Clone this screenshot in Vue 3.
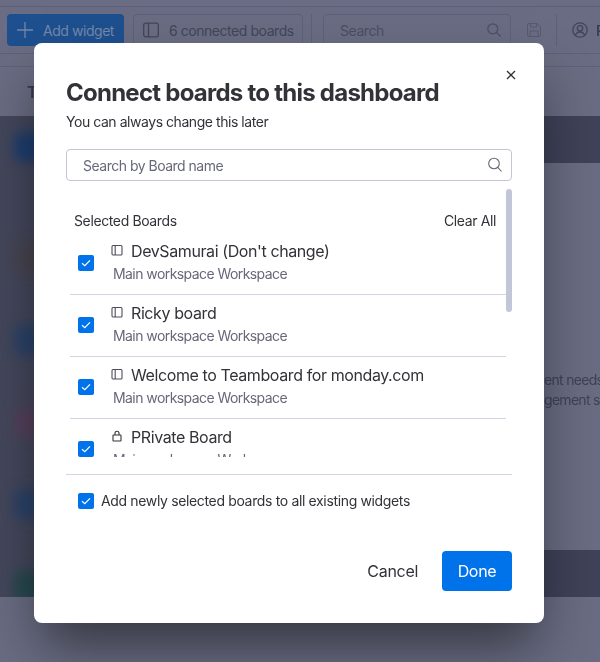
<script setup>
const boards = [
  { name: "DevSamurai (Don't change)", icon: 'board' },
  { name: 'Ricky board', icon: 'board' },
  { name: 'Welcome to Teamboard for monday.com', icon: 'board' },
  { name: 'PRivate Board', icon: 'lock' },
]
const blobs = ['blue1', 'grey', 'blue2', 'red', 'blue2', 'green']
</script>

<template>
  <div class="page">
    <div class="back">
      <div class="strip"></div>
      <header class="toolbar">
        <button class="add">
          <svg width="16" height="16" viewBox="0 0 16 16"><path d="M8 0v16M0 8h16" stroke="currentColor" stroke-width="1.300" fill="none" /></svg>
          <span>Add widget</span>
        </button>
        <div class="connected">
          <svg width="16" height="16" viewBox="0 0 16 16" fill="none" stroke="currentColor" stroke-width="1.300"><rect x=".7" y="1.200" width="14.600" height="13.600" rx="2" /><path d="M5.500 1.200v13.600" /></svg>
          <span>6 connected boards</span>
        </div>
        <i class="vsep"></i>
        <div class="bsearch">
          <span>Search</span>
          <svg width="14" height="14" viewBox="0 0 14 14" fill="none" stroke="currentColor" stroke-width="1.200"><circle cx="5.800" cy="5.800" r="5" /><path d="M9.400 9.400 13.500 13.500" /></svg>
        </div>
        <svg class="save" width="14" height="14" viewBox="0 0 14 14" fill="none" stroke="currentColor" stroke-width="1"><path d="M.5 2A1.500 1.500 0 0 1 2 .5h8L13.500 4v8a1.500 1.500 0 0 1-1.500 1.500H2A1.500 1.500 0 0 1 .5 12z" /><path d="M3.500.5v3.500h6V.5M3 13.500V8h8v5.500" /></svg>
        <i class="vsep last"></i>
        <svg class="user" width="16" height="16" viewBox="0 0 16 16" fill="none" stroke="currentColor" stroke-width="1.300"><circle cx="8" cy="8" r="7.200" /><circle cx="8" cy="6.300" r="2.700" /><path d="M3.300 13.400c.8-2.300 2.600-3.400 4.700-3.400s3.900 1.100 4.700 3.400" /></svg>
        <span class="uname">Ricky</span>
      </header>
      <div class="subbar"></div>
      <div class="tabs"><span>T</span></div>
      <div class="content">
        <div class="side">
          <i v-for="(b, i) in blobs" :key="i" class="blob" :class="b"></i>
        </div>
        <div class="main">
          <div class="band"></div>
          <div class="desc">
            <p>ent needs</p>
            <p>gement s</p>
          </div>
          <div class="band"></div>
        </div>
      </div>
    </div>

    <section class="modal">
      <button class="close" aria-label="Close">
        <svg width="10" height="10" viewBox="0 0 10 10"><path d="M1 1l8 8M9 1l-8 8" stroke="#323338" stroke-width="1.300" fill="none" /></svg>
      </button>
      <h1>Connect boards to this dashboard</h1>
      <p class="sub">You can always change this later</p>

      <div class="search">
        <span>Search by Board name</span>
        <svg width="16" height="16" viewBox="0 0 16 16" fill="none" stroke="#676879" stroke-width="1.100"><circle cx="7" cy="6.500" r="5.300" /><path d="M10.800 10.400 14.500 14.500" /></svg>
      </div>

      <div class="listwrap">
        <div class="scroller">
          <div class="listhead">
            <span>Selected Boards</span>
            <span>Clear All</span>
          </div>
          <ul class="list">
            <li v-for="b in boards" :key="b.name" class="row">
              <span class="check">
                <svg width="16" height="16" viewBox="0 0 16 16"><path d="M4 8.200 6.800 10.600 12 5.400" stroke="#fff" stroke-width="1.200" fill="none" /></svg>
              </span>
              <div class="rowtext">
                <div class="rowname">
                  <svg v-if="b.icon === 'board'" class="ico" width="12" height="12" viewBox="0 0 12 12" fill="none" stroke="#4d4e5c" stroke-width="1.100"><rect x="1" y="1.500" width="10" height="9.500" rx="1" /><path d="M4.200 1.500v9.500" /></svg>
                  <svg v-else class="ico" width="12" height="12" viewBox="0 0 12 12" fill="none" stroke="#323338" stroke-width="1.100"><rect x="2" y="5" width="8" height="6" rx=".6" /><path d="M4 5V3.200a2 2 0 0 1 4 0V5" /></svg>
                  <span>{{ b.name }}</span>
                </div>
                <div class="rowsub">Main workspace Workspace</div>
              </div>
            </li>
          </ul>
        </div>
        <i class="thumb"></i>
      </div>

      <label class="addnew">
        <span class="check">
          <svg width="16" height="16" viewBox="0 0 16 16"><path d="M4 8.200 6.800 10.600 12 5.400" stroke="#fff" stroke-width="1.200" fill="none" /></svg>
        </span>
        <span>Add newly selected boards to all existing widgets</span>
      </label>

      <footer class="foot">
        <button class="cancel">Cancel</button>
        <button class="done">Done</button>
      </footer>
    </section>
  </div>
</template>

<style>
html, body { margin: 0; padding: 0; }
</style>

<style scoped>
.page {
  position: relative;
  width: 600px;
  height: 662px;
  overflow: hidden;
  background: #696c82;
  font-family: Inter, "Open Sans", sans-serif;
}
.back {
  height: 662px;
  display: flex;
  flex-direction: column;
  color: #3c3e4c;
  background: #696c82;
  filter: blur(0.5px);
}
.strip { height: 6px; flex: none; border-bottom: 1px solid #5d607c; }
.toolbar {
  height: 47px;
  flex: none;
  padding: 7px 0 0 7px;
  box-sizing: border-box;
  display: flex;
  align-items: flex-start;
  border-bottom: 1px solid #5d607c;
  font-size: 14px;
  letter-spacing: -0.45px;
  color: #42445a;
  white-space: nowrap;
}
.add {
  width: 117px; height: 32px; flex: none;
  display: flex; align-items: center; gap: 10px;
  padding: 0 0 0 10px; border: 0; border-radius: 4px;
  background: #1e4f8e; color: #7387a9; font: inherit; letter-spacing: inherit;
}
.connected {
  margin-left: 9px; width: 170px; height: 32px; flex: none; box-sizing: border-box;
  display: flex; align-items: center; gap: 10px; padding-left: 9px;
  border: 1px solid #5d607c; border-radius: 4px;
}
.vsep { width: 1px; height: 32px; background: #5d607c; margin: 0 11px 0 8px; flex: none; }
.bsearch {
  width: 188px; height: 32px; flex: none; box-sizing: border-box;
  display: flex; align-items: center; justify-content: space-between; padding: 0 9px 0 16px;
  border: 1px solid #5d607c; border-radius: 4px; color: #4b4d63;
}
.save { margin: 9px 0 0 16px; flex: none; color: #565970; }
.vsep.last { margin: 0 15px; }
.user { margin-top: 8px; flex: none; }
.uname { margin: 8px 0 0 8px; font-weight: 600; color: #3c3e52; }
.subbar { height: 13px; flex: none; box-sizing: border-box; border-bottom: 1px solid #5d607c; }
.tabs {
  height: 49px;
  flex: none;
  padding-left: 27px;
  box-sizing: border-box;
  font-size: 16px;
  font-weight: 600;
  line-height: 50px;
  color: #35374a;
}
.content { height: 481px; flex: none; display: flex; }
.side {
  width: 34px; flex: none; box-sizing: border-box; padding-top: 16px;
  background: #44475b; overflow: hidden;
}
.blob { display: block; width: 30px; height: 30px; margin: 0 0 52px 14px; border-radius: 8px; filter: blur(6px); }
.blob:first-child { margin-bottom: 81px; }
.main { flex: 1; display: flex; flex-direction: column; justify-content: space-between; }
.band { height: 47px; background: #3f4258; flex: none; }
.desc {
  display: flex; flex-direction: column; align-items: flex-end;
  font-size: 14px; line-height: 20px; color: #3f4156; letter-spacing: -0.7px;
  margin-top: 67px; flex: 1; justify-content: center;
}
.desc p { margin: 0; width: 56px; overflow: hidden; white-space: nowrap; }

.modal {
  position: absolute;
  left: 34px; top: 43px;
  width: 510px; height: 580px;
  box-sizing: border-box;
  padding: 34px 32px 0;
  background: #fff;
  border-radius: 8px;
  color: #323338;
  box-shadow: 0 30px 50px -8px rgba(0, 0, 0, 0.5);
}
.close {
  position: absolute; right: 28px; top: 27px;
  width: 10px; height: 10px; padding: 0; border: 0; background: none; display: flex;
}
h1 {
  margin: 0;
  font-size: 24px;
  line-height: 32px;
  font-weight: 700;
  letter-spacing: -0.75px;
}
.sub { margin: 3px 0 0; font-size: 14px; line-height: 20px; letter-spacing: -0.45px; }
.search {
  margin-top: 17px;
  height: 32px;
  box-sizing: border-box;
  border: 1px solid #c3c6d4;
  border-radius: 4px;
  display: flex;
  align-items: center;
  justify-content: space-between;
  padding: 0 8px 0 16px;
  font-size: 14px;
  letter-spacing: -0.5px;
  color: #676879;
}
.listwrap {
  position: relative;
  margin-top: 8px;
  height: 286px;
  box-sizing: border-box;
  padding-bottom: 17px;
  border-bottom: 1px solid #d0d4e4;
}
.scroller { height: 268px; overflow: hidden; }
.listhead {
  display: flex;
  justify-content: space-between;
  padding: 23px 16px 1px 8px;
  font-size: 14px;
  line-height: 18px;
  letter-spacing: -0.38px;
}
.list { list-style: none; margin: 0; padding: 0 6px 0 4px; }
.row {
  height: 62px;
  box-sizing: border-box;
  display: flex;
  align-items: center;
  border-bottom: 1px solid #d0d4e4;
}
.row:first-child { height: 64px; padding-top: 2px; }
.check {
  width: 16px; height: 16px; flex: none; border-radius: 2px; background: #0073ea;
  display: flex;
}
.row .check { margin: -2px 0 0 8px; }
.rowtext { margin-left: 19px; align-self: flex-start; padding-top: 7px; }
.rowname {
  display: flex; align-items: center;
  font-size: 16px; line-height: 22px; letter-spacing: -0.4px; white-space: nowrap;
}
.ico { margin: -2px 8px 0 -2px; flex: none; }
.rowsub { margin-top: 2px; font-size: 14px; line-height: 20px; color: #676879; letter-spacing: -0.57px; white-space: nowrap; }
.thumb {
  position: absolute; right: 0; top: 0; width: 6px; height: 123px;
  border-radius: 3px; background: #c3c6d8;
}
.addnew {
  display: flex; align-items: center; gap: 7px;
  margin-top: 17px; padding-left: 12px;
  font-size: 14px; line-height: 18px; letter-spacing: -0.35px;
}
.foot {
  display: flex; justify-content: flex-end; align-items: center;
  margin-top: 41px; gap: 24px;
}
.foot button { font: inherit; font-size: 16px; letter-spacing: -0.3px; border: 0; }
.cancel { background: none; color: #323338; padding: 0; }
.done { width: 70px; height: 40px; border-radius: 4px; background: #0073ea; color: #fff; }
.blue1 { background: #1d3d6e; }
.grey { background: #47444f; }
.blue2 { background: #2a4268; }
.red { background: #54405a; }
.green { background: #26494d; }
</style>
